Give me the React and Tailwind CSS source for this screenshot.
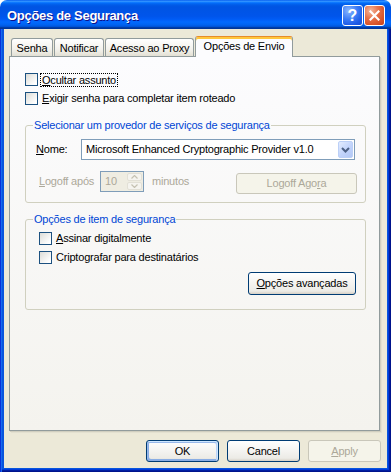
import React from "react";

function U({ children }) {
  return <span className="underline decoration-1 underline-offset-[1px]">{children}</span>;
}

function Check() {
  return (
    <span className="block w-[13px] h-[13px] shrink-0 border border-[#1c5180] bg-[linear-gradient(135deg,#dcdcd7,#ffffff_85%)]" />
  );
}

function Tab({ children, w }) {
  return (
    <div
      className={
        "h-[18px] pt-[1px] border border-b-0 border-[#919b9c] rounded-t-[3px] bg-[linear-gradient(to_bottom,#ffffff,#f3f2ec_60%,#e3e0d4)] flex items-center justify-center whitespace-nowrap " +
        w
      }
    >
      {children}
    </div>
  );
}

function SpinArrow({ up }) {
  return (
    <svg width="7" height="4" viewBox="0 0 7 4">
      <path
        d={up ? "M0.5 3.5 L3.5 0.5 L6.5 3.5" : "M0.5 0.5 L3.5 3.5 L6.5 0.5"}
        fill="none"
        stroke="#c5c2b2"
        strokeWidth="1.2"
      />
    </svg>
  );
}

export default function App() {
  return (
    <div className="w-[391px] h-[472px] flex flex-col font-['Liberation_Sans',Arial,sans-serif] text-[11px] tracking-[-0.2px] text-black bg-white select-none">
      {/* Title bar */}
      <div className="h-[29px] shrink-0 rounded-t-[7px] bg-[linear-gradient(to_bottom,#0058ee_0%,#3593ff_4%,#288eff_6%,#127dff_8%,#036ffc_10%,#0262ee_14%,#0057e5_20%,#0054e3_24%,#0055eb_56%,#005bf5_66%,#026afe_76%,#0062ef_86%,#0052d6_92%,#0040ab_94%,#003092_100%)] flex items-center pl-[7px] pr-[6px]">
        <span className="mt-[2px] text-white font-bold text-[13px] tracking-[-0.3px] leading-none [text-shadow:1px_1px_#0f1089]">
          Opções de Segurança
        </span>
        <div className="ml-auto mt-[2px] flex gap-[1px]">
          <div className="w-[21px] h-[21px] rounded-[3px] border border-white bg-[radial-gradient(circle_at_30%_25%,#8cb8ff_0%,#3b7bf5_45%,#1d5ae6_75%,#1a4fd0_100%)] flex items-center justify-center text-white font-bold text-[16px] tracking-normal leading-none">
            ?
          </div>
          <div className="w-[21px] h-[21px] rounded-[3px] border border-white bg-[radial-gradient(circle_at_30%_25%,#f4b79c_0%,#e6714a_40%,#d9562c_70%,#c4401a_100%)] flex items-center justify-center">
            <svg width="11" height="11" viewBox="0 0 11 11">
              <path d="M1.5 1.5 L9.5 9.5 M9.5 1.5 L1.5 9.5" stroke="#ffffff" strokeWidth="2.2" strokeLinecap="square" />
            </svg>
          </div>
        </div>
      </div>

      {/* Frame */}
      <div className="flex-1 flex flex-col bg-[#0855dd] px-[4px] pb-[4px] shadow-[inset_1px_0_#0831d9,inset_2px_0_#166aee,inset_-1px_-1px_#00138c,inset_-2px_-2px_#001ea0,inset_-3px_-3px_#003bda]">
        <div className="flex-1 flex flex-col bg-[#ece9d8]">
          {/* Tabs */}
          <div className="pt-[7px] pl-[7px]">
            <div className="h-[20px] flex items-end gap-[1px]">
              <Tab w="w-[42px]">Senha</Tab>
              <Tab w="w-[50px]">Notificar</Tab>
              <Tab w="w-[89px]">Acesso ao Proxy</Tab>
              <div className="relative z-10 -mb-px w-[98px] h-[21px] pb-[2px] border-x border-t border-[#919b9c] border-t-[#e68b2c] rounded-t-[3px] bg-[#fcfcfe] shadow-[inset_0_2px_#ffc73c] flex items-center justify-center whitespace-nowrap">
                Opções de Envio
              </div>
            </div>
          </div>

          {/* Panel */}
          <div className="ml-[5px] w-[371px] h-[375px] shrink-0 border border-[#919b9c] bg-[linear-gradient(to_bottom,#fcfcfe,#f4f3ee)] shadow-[1px_1px_#d0cebf,2px_2px_#e3e0d0] pt-[16px] pl-[15px]">
            <div className="flex items-center h-[13px]">
              <Check />
              <span className="ml-[2px] border border-dotted border-black px-[1px] leading-[12px] whitespace-nowrap">
                <U>O</U>cultar assunto
              </span>
            </div>
            <div className="mt-[6px] flex items-center h-[13px]">
              <Check />
              <span className="ml-[4px] whitespace-nowrap">
                <U>E</U>xigir senha para completar item roteado
              </span>
            </div>

            {/* Group 1 */}
            <fieldset className="mt-[13px] w-[341px] border border-[#d0d0bf] rounded-[3px] pb-[8px]">
              <legend className="ml-[7px] px-[1px] leading-[15px] text-[#0046d5] whitespace-nowrap">
                Selecionar um provedor de serviços de segurança
              </legend>
              <div className="mt-[6px] flex items-center pl-[10px]">
                <span className="w-[45px] shrink-0">
                  <U>N</U>ome:
                </span>
                <div className="w-[274px] h-[21px] border border-[#7f9db9] bg-white flex items-center p-[1px]">
                  <span className="flex-1 pl-[3px] whitespace-nowrap overflow-hidden">
                    Microsoft Enhanced Cryptographic Provider v1.0
                  </span>
                  <span className="w-[15px] h-[17px] rounded-[2px] border border-[#bcd0f7] bg-[linear-gradient(135deg,#e3ecfe,#c1d3fb_55%,#b3c8f5)] flex items-center justify-center">
                    <svg width="9" height="6" viewBox="0 0 9 6">
                      <path d="M1 1 L4.5 4.5 L8 1" fill="none" stroke="#4d6185" strokeWidth="2" />
                    </svg>
                  </span>
                </div>
              </div>
              <div className="mt-[11px] flex items-start pl-[13px] pr-[8px]">
                <span className="w-[61px] shrink-0 leading-[21px] text-[#aca899] whitespace-nowrap">
                  <U>L</U>ogoff após
                </span>
                <div className="w-[44px] h-[21px] border border-[#7f9db9] bg-[#efede2] flex items-stretch p-[1px]">
                  <span className="flex-1 pl-[3px] leading-[17px] text-[#aca899]">10</span>
                  <div className="w-[15px] flex flex-col gap-[1px]">
                    <span className="flex-1 rounded-[2px] border border-[#e2e0d6] bg-[#f5f4ef] flex items-center justify-center">
                      <SpinArrow up />
                    </span>
                    <span className="flex-1 rounded-[2px] border border-[#e2e0d6] bg-[#f5f4ef] flex items-center justify-center">
                      <SpinArrow />
                    </span>
                  </div>
                </div>
                <span className="ml-[8px] leading-[21px] text-[#aca899]">minutos</span>
                <div className="ml-auto mt-[2px] w-[121px] h-[21px] border border-[#c9c7ba] rounded-[3px] bg-[#f5f4ea] text-[#aca899] flex items-center justify-center whitespace-nowrap">
                  <span>
                    Logoff Ago<U>r</U>a
                  </span>
                </div>
              </div>
            </fieldset>

            {/* Group 2 */}
            <fieldset className="mt-[9px] w-[341px] border border-[#d0d0bf] rounded-[3px] pb-[14px]">
              <legend className="ml-[7px] px-[1px] leading-[15px] text-[#0046d5] whitespace-nowrap">
                Opções de item de segurança
              </legend>
              <div className="mt-[5px] flex items-center h-[13px] pl-[13px]">
                <Check />
                <span className="ml-[4px] whitespace-nowrap">
                  <U>A</U>ssinar digitalmente
                </span>
              </div>
              <div className="mt-[6px] flex items-center h-[13px] pl-[13px]">
                <Check />
                <span className="ml-[4px] whitespace-nowrap">Criptografar para destinatários</span>
              </div>
              <div className="mt-[8px] flex justify-end pr-[9px]">
                <div className="w-[108px] h-[23px] border border-[#003c74] rounded-[3px] bg-[linear-gradient(180deg,#ffffff,#ecebe6_86%,#d6d0c5)] flex items-center justify-center whitespace-nowrap">
                  <span>
                    <U>O</U>pções avançadas
                  </span>
                </div>
              </div>
            </fieldset>
          </div>

          {/* Bottom buttons */}
          <div className="mt-[9px] flex justify-end gap-[8px] pr-[6px]">
            <div className="w-[73px] h-[22px] border border-[#003c74] rounded-[3px] bg-[linear-gradient(180deg,#ffffff,#ecebe6_86%,#d6d0c5)] shadow-[inset_-1px_1px_#cee7ff,inset_1px_2px_#98b8ea,inset_-2px_2px_#bcd4f6,inset_1px_-1px_#89ade4,inset_2px_-2px_#89ade4] flex items-center justify-center">
              OK
            </div>
            <div className="w-[73px] h-[22px] border border-[#003c74] rounded-[3px] bg-[linear-gradient(180deg,#ffffff,#ecebe6_86%,#d6d0c5)] flex items-center justify-center">
              Cancel
            </div>
            <div className="w-[73px] h-[22px] border border-[#c9c7ba] rounded-[3px] bg-[#f5f4ea] text-[#aca899] flex items-center justify-center">
              <span>
                <U>A</U>pply
              </span>
            </div>
          </div>
        </div>
      </div>
    </div>
  );
}
